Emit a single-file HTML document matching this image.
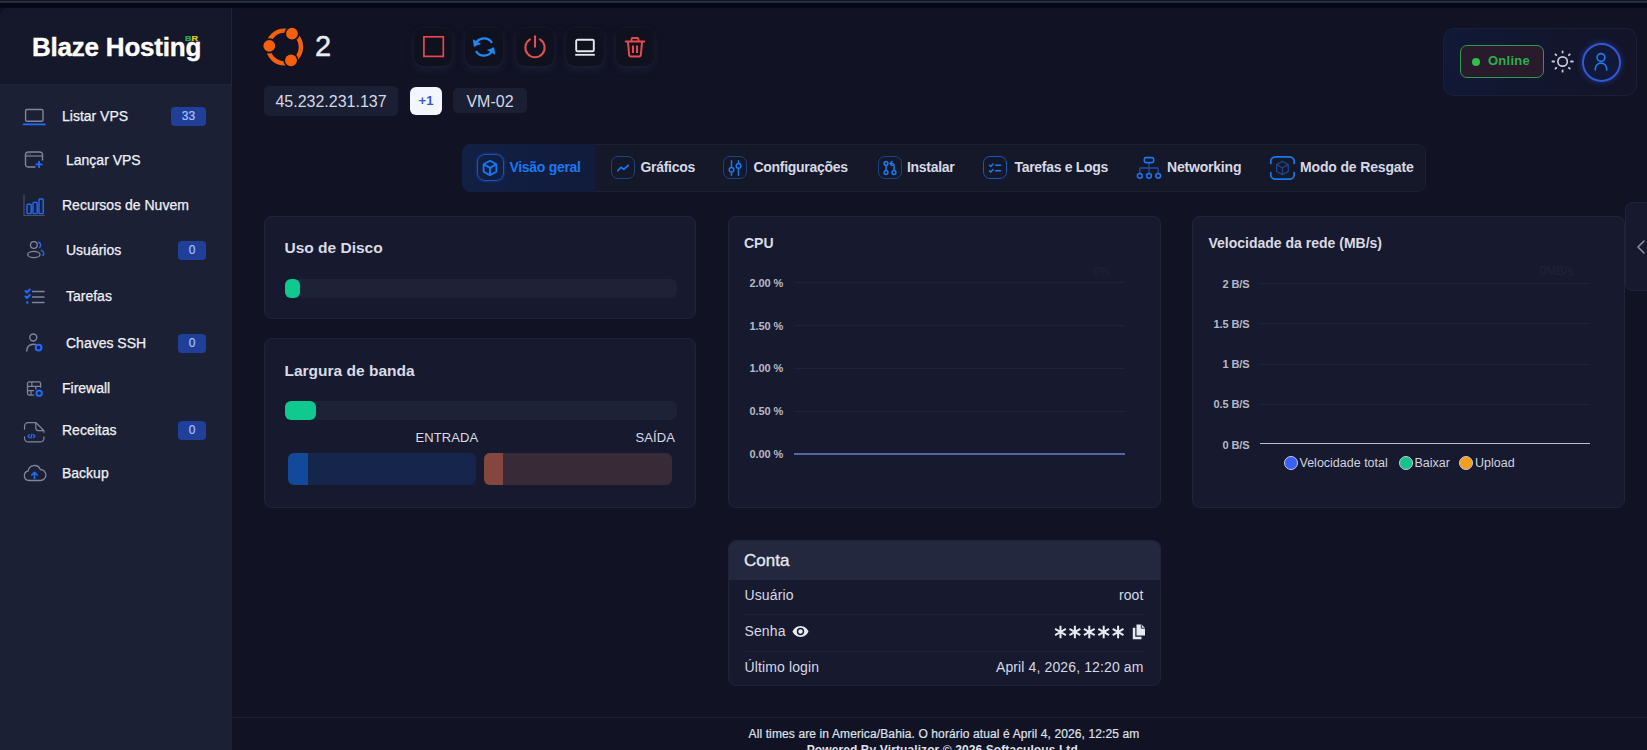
<!DOCTYPE html>
<html lang="pt">
<head>
<meta charset="utf-8">
<title>Blaze Hosting - VPS</title>
<style>
*{box-sizing:border-box;margin:0;padding:0}
html,body{width:1647px;height:750px;overflow:hidden;background:#111224;font-family:"Liberation Sans",sans-serif;color:#e6e8f0}
.abs{position:absolute}
#topstrip{position:absolute;left:0;top:0;width:1647px;height:8px;background:linear-gradient(180deg,#171718 0,#171718 0.8px,#2c314b 0.8px,#2a2f49 2px,#1a1f38 2.8px,#040919 3.4px,#030819 7px,#0a0e20 8px)}
#sidebar{position:absolute;left:0;top:8px;width:232px;height:742px;background:#1c2035;border-top-left-radius:10px}
#logo{position:absolute;left:0;top:0;width:232px;height:77px;background:#15172a;border-bottom:1px solid #20243a;border-right:1px solid #20243a;border-top-left-radius:10px}
#logo .t{position:absolute;left:32px;top:23.5px;font-size:26px;font-weight:bold;color:#fff;letter-spacing:-0.22px;white-space:nowrap;-webkit-text-stroke:0.4px #fff}
.nav{position:absolute;left:0;width:232px;height:30px}
.nav .ic{position:absolute;left:22px;top:3px;width:24px;height:24px}
.nav .lb{position:absolute;top:7px;font-size:14px;color:#eef0f6;white-space:nowrap;-webkit-text-stroke:0.25px #eef0f6}
.nav .bd{position:absolute;top:5.700px;height:19.600px;background:#1f3f98;color:#a9c0ff;font-size:12px;line-height:19.500px;text-align:center;border-radius:4px;-webkit-text-stroke:0.2px #a9c0ff}
#main{position:absolute;left:232px;top:8px;width:1415px;height:742px;background:#111224}
.card{position:absolute;background:#171a2e;border:1px solid #20243a;border-radius:8px}
.ctitle{position:absolute;font-weight:bold;color:#d9dbe6;white-space:nowrap}
.track{position:absolute;background:#1e2237;border-radius:6px}
.fill{position:absolute;left:0;top:0;height:100%;background:#10c98f;border-radius:6px}

.abtn{position:absolute;top:20px;width:38px;height:38px;border-radius:9px;background:#10111f;box-shadow:0 4px 7px rgba(36,42,70,.5),0 0 3px rgba(30,34,58,.6)}
.abtn svg{position:absolute;left:7px;top:7px;width:24px;height:24px}
.chip{position:absolute;background:#1b1f33;border-radius:5px;color:#d5d8e6;font-size:16px;text-align:center;white-space:nowrap}
#tabs{position:absolute;left:230px;top:136px;width:964px;height:48px;background:#151829;border:1px solid #1c2036;border-radius:9px}
.tab{position:absolute;top:0;height:46px}
.tab .ti{position:absolute;top:10px;width:26px;height:26px}
.tab .tl{position:absolute;top:15px;font-size:14px;font-weight:bold;color:#dfe2ee;white-space:nowrap;letter-spacing:-0.2px}

.tbox{position:absolute;top:11px;width:24px;height:23px;border:1px solid #1b4187;border-radius:7px}
.tbox svg,.tsv{position:absolute}
.tl{position:absolute;top:14px;font-size:14px;line-height:17px;font-weight:bold;color:#d6d9e5;white-space:nowrap;letter-spacing:-0.3px}

.yl{position:absolute;font-size:11px;line-height:13px;font-weight:bold;color:#b6b9c8;margin-top:0.6px;white-space:nowrap;letter-spacing:-0.1px}
.gl{position:absolute;height:1px;background:#1f2338}
.row{position:absolute;left:16px;font-size:14px;line-height:17px;color:#d5d8e6;white-space:nowrap;letter-spacing:0.12px;margin-top:-0.5px}
.rv{position:absolute;right:16px;font-size:14px;line-height:17px;color:#d5d8e6;white-space:nowrap;text-align:right;letter-spacing:0.12px;margin-top:-0.5px}
.lg{position:absolute;top:239px;font-size:12.5px;line-height:14px;color:#d0d3df;white-space:nowrap}
.ld{position:absolute;top:239.500px;width:14px;height:14px;border-radius:50%;border:1px solid #c3cbea}
</style>
</head>
<body>
<div id="topstrip"></div>

<!-- SIDEBAR -->
<div id="sidebar">
  <div id="logo"><div class="t">Blaze Hosting</div>
    <div class="abs" style="left:185px;top:26.5px;font-size:9px;line-height:9px;font-weight:bold;transform:scaleY(0.8);transform-origin:0 0;-webkit-text-stroke:0.3px currentColor"><span style="color:#2fae5a">B</span><span style="color:#f2c81c">R</span></div>
  </div>

  <div class="nav" style="top:93px">
    <svg class="ic" viewBox="0 0 24 24" fill="none"><rect x="3.600" y="5.500" width="17.400" height="11.800" rx="1.400" stroke="#80859d" stroke-width="1.400"/><path d="M1.500 20.400H23" stroke="#1f6bff" stroke-width="1.6" stroke-linecap="round"/></svg>
    <div class="lb" style="left:62px">Listar VPS</div><div class="bd" style="left:171px;width:35px">33</div>
  </div>
  <div class="nav" style="top:137px">
    <svg class="ic" viewBox="0 0 24 24" fill="none"><path d="M13 19H6.100A2.600 2.600 0 0 1 3.500 16.400V6.600A2.600 2.600 0 0 1 6.100 4H17.900A2.600 2.600 0 0 1 20.500 6.600V12" stroke="#80859d" stroke-width="1.400" stroke-linecap="round"/><path d="M3.500 8H20.500" stroke="#80859d" stroke-width="1.200"/><path d="M6 6h.01M8.200 6h.01" stroke="#80859d" stroke-width="1.100" stroke-linecap="round"/><path d="M17 13.600V19.200M14.200 16.400H19.800" stroke="#1f6bff" stroke-width="1.900" stroke-linecap="round"/></svg>
    <div class="lb" style="left:66px">Lançar VPS</div>
  </div>
  <div class="nav" style="top:182px">
    <svg class="ic" viewBox="0 0 24 24" fill="none"><path d="M2 1.500V22.500H23" stroke="#4a4f68" stroke-width="1.1"/><rect x="5" y="11.300" width="4.200" height="9.300" rx="0.800" stroke="#1f6bff" stroke-width="1.4"/><rect x="11" y="9.400" width="4.200" height="11.200" rx="0.800" stroke="#1f6bff" stroke-width="1.4"/><rect x="17" y="6" width="4.200" height="14.600" rx="0.800" stroke="#1f6bff" stroke-width="1.400"/></svg>
    <div class="lb" style="left:62px">Recursos de Nuvem</div>
  </div>
  <div class="nav" style="top:227px">
    <svg class="ic" viewBox="0 0 24 24" fill="none" style="left:23.500px;top:2.500px;width:22.500px;height:22.500px"><circle cx="10.500" cy="7.500" r="3.600" stroke="#80859d" stroke-width="1.400"/><ellipse cx="10.500" cy="17.600" rx="6.600" ry="3.400" stroke="#80859d" stroke-width="1.400"/><path d="M15.500 4.500a3.300 3.300 0 0 1 1.200 5.600" stroke="#1f6bff" stroke-width="1.500" stroke-linecap="round"/><path d="M18.500 13.200c1.700.8 2.600 2 2.600 3.300 0 .8-.3 1.500-.9 2.100" stroke="#1f6bff" stroke-width="1.500" stroke-linecap="round"/></svg>
    <div class="lb" style="left:66px">Usuários</div><div class="bd" style="left:178px;width:28px">0</div>
  </div>
  <div class="nav" style="top:273px">
    <svg class="ic" viewBox="0 0 24 24" fill="none" style="left:23px"><path d="M9.500 7.500H21M9.500 13H21M9.500 18.500H21" stroke="#80859d" stroke-width="1.500" stroke-linecap="round"/><path d="M2.500 7l1.500 1.500 2.800-3M2.500 12.500l1.500 1.500 2.800-3" stroke="#1f6bff" stroke-width="2" stroke-linecap="round" stroke-linejoin="round"/><circle cx="4.300" cy="18.500" r="1.200" fill="#1f6bff"/></svg>
    <div class="lb" style="left:66px">Tarefas</div>
  </div>
  <div class="nav" style="top:320px">
    <svg class="ic" viewBox="0 0 24 24" fill="none"><circle cx="11.300" cy="6.500" r="3.500" stroke="#80859d" stroke-width="1.400"/><path d="M4.800 20c0-4 2.400-6.800 6.500-6.800 .8 0 1.500.1 2.200.3" stroke="#80859d" stroke-width="1.400" stroke-linecap="round"/><circle cx="16.600" cy="16.600" r="2.900" stroke="#1f6bff" stroke-width="2"/></svg>
    <div class="lb" style="left:66px">Chaves SSH</div><div class="bd" style="left:178px;width:28px">0</div>
  </div>
  <div class="nav" style="top:365px">
    <svg class="ic" viewBox="0 0 24 24" fill="none" style="left:24.300px;top:5px;width:21px;height:21px"><path d="M11 19.500H6A2 2 0 0 1 4 17.500V6.500A2 2 0 0 1 6 4.500H17A2 2 0 0 1 19 6.500V10.500" stroke="#80859d" stroke-width="1.500" stroke-linecap="round"/><path d="M4 9.500H19M4 14.500H11.500M9 4.500V9.500M13.500 9.500V13M8 14.500V19.500" stroke="#80859d" stroke-width="1.400"/><circle cx="17.300" cy="17.300" r="3.100" stroke="#1f6bff" stroke-width="2.200"/></svg>
    <div class="lb" style="left:62px">Firewall</div>
  </div>
  <div class="nav" style="top:407px">
    <svg class="ic" viewBox="0 0 24 24" fill="none" style="left:22.300px;top:4.500px;width:24.500px;height:24.500px"><path d="M2.500 9V6A3.500 3.500 0 0 1 6 2.500H13.500L21.500 10.500V12" stroke="#80859d" stroke-width="1.200" stroke-linecap="round" stroke-linejoin="round"/><path d="M13.500 2.500V7.500A3 3 0 0 0 16.500 10.500H21.500" stroke="#80859d" stroke-width="1.200" stroke-linejoin="round"/><path d="M2.500 16.500V18A3.500 3.500 0 0 0 6 21.500H18A3.500 3.500 0 0 0 21.500 18V16.500" stroke="#80859d" stroke-width="1.200" stroke-linecap="round"/><path d="M7.300 14.300l-1.500 1.500 1.500 1.500M11.300 14.300l1.500 1.500-1.500 1.500M9.800 14l-1 3.600" stroke="#1f6bff" stroke-width="1.300" stroke-linecap="round" stroke-linejoin="round"/></svg>
    <div class="lb" style="left:62px">Receitas</div><div class="bd" style="left:178px;width:28px">0</div>
  </div>
  <div class="nav" style="top:450px">
    <svg class="ic" viewBox="0 0 24 24" fill="none" style="left:22px;top:3px;width:25px;height:24px"><path d="M6.500 19.500A4.800 4.800 0 0 1 5.700 10 6.300 6.300 0 0 1 17.800 8.500 5.500 5.500 0 0 1 18 19.500Z" stroke="#80859d" stroke-width="1.300" stroke-linejoin="round"/><path d="M12 17.500V11.500M9.300 14l2.700-2.700 2.700 2.700" stroke="#1f6bff" stroke-width="1.700" stroke-linecap="round" stroke-linejoin="round"/></svg>
    <div class="lb" style="left:62px">Backup</div>
  </div>

</div>

<!-- MAIN -->
<div id="main">

  <!-- ubuntu -->
  <svg class="abs" style="left:28px;top:16px;width:48px;height:48px" viewBox="0 0 48 48" fill="none">
    <circle cx="24.500" cy="23" r="16.400" stroke="#f4600c" stroke-width="4.400"/>
    <circle cx="9.3" cy="21.8" r="7.6" fill="#111224"/><circle cx="32" cy="9.700" r="7.600" fill="#111224"/><circle cx="31" cy="36.400" r="7.600" fill="#111224"/>
    <circle cx="9.300" cy="21.800" r="5.900" fill="#f4600c"/><circle cx="32" cy="9.700" r="5.900" fill="#f4600c"/><circle cx="31" cy="36.400" r="5.900" fill="#f4600c"/>
  </svg>
  <div class="abs" style="left:83px;top:22px;font-size:29px;line-height:33px;color:#e8ecf8;-webkit-text-stroke:0.4px #e8ecf8">2</div>
  <!-- action buttons -->
  <div class="abtn" style="left:182px"><svg viewBox="0 0 24 24" fill="none"><rect x="2.900" y="1.800" width="19.400" height="19.600" stroke="#e5484d" stroke-width="1.700"/></svg></div>
  <div class="abtn" style="left:233px"><svg viewBox="0 0 24 24" fill="none" style="overflow:visible"><g transform="translate(12 12) scale(1.14 1.09) translate(-12 -12)"><path d="M4.200 10.500A8 8 0 0 1 18.600 7.500" stroke="#1e88f5" stroke-width="2.100" stroke-linecap="round"/><path d="M19.800 13.500A8 8 0 0 1 5.400 16.500" stroke="#1e88f5" stroke-width="2.100" stroke-linecap="round"/><path d="M2.200 4.800l.9 6.700 6.400-2.200z" fill="#1e88f5"/><path d="M21.800 19.200l-.9-6.700-6.400 2.200z" fill="#1e88f5"/></g></svg></div>
  <div class="abtn" style="left:284px"><svg viewBox="0 0 24 24" fill="none" style="overflow:visible"><g transform="translate(12 12) scale(1.07) translate(-12 -12.3)"><path d="M12 2.200V12" stroke="#e05252" stroke-width="1.900" stroke-linecap="round"/><path d="M7.300 5.200A9 9 0 1 0 16.700 5.200" stroke="#e05252" stroke-width="1.900" stroke-linecap="round"/></g></svg></div>
  <div class="abtn" style="left:333.500px"><svg viewBox="0 0 24 24" fill="none"><rect x="3.200" y="4.800" width="17.600" height="11.400" rx="1.300" stroke="#e8e8f0" stroke-width="1.900"/><path d="M2.200 19.800H21.800" stroke="#e8e8f0" stroke-width="1.800"/></svg></div>
  <div class="abtn" style="left:384px"><svg viewBox="0 0 24 24" fill="none"><path d="M2.800 6.500H21.200" stroke="#e5484d" stroke-width="2" stroke-linecap="round"/><path d="M8.500 6V4.200A1.200 1.200 0 0 1 9.700 3H14.300A1.200 1.200 0 0 1 15.500 4.200V6" stroke="#e5484d" stroke-width="1.900"/><path d="M5 7l1.100 12.700A2 2 0 0 0 8.100 21.500H15.900A2 2 0 0 0 17.900 19.700L19 7" stroke="#e5484d" stroke-width="2" stroke-linejoin="round"/><path d="M10 10.500V18M14 10.500V18" stroke="#e5484d" stroke-width="2"/></svg></div>
  <!-- chips -->
  <div class="chip" style="left:32px;top:78px;width:134px;height:30px;line-height:32px">45.232.231.137</div>
  <div class="chip" style="left:178px;top:79px;width:32px;height:28px;line-height:28px;background:#f3f6ff;color:#3558d6;font-size:13px;font-weight:bold;border-radius:6px">+1</div>
  <div class="chip" style="left:221px;top:80px;width:74px;height:25px;line-height:27px">VM-02</div>
  <!-- top right panel -->
  <div class="abs" style="left:1211px;top:20px;width:194px;height:68px;border-radius:11px;border:1px solid #1b2039;background:linear-gradient(100deg,#111937 0%,#12162e 50%,#141428 100%)"></div>
  <div class="abs" style="left:1228px;top:37px;width:84px;height:33px;border:1.5px solid #2c9a4b;border-radius:7px;background:#2a1b2c"></div>
  <div class="abs" style="left:1240px;top:49.500px;width:8px;height:8px;border-radius:50%;background:#2fbf4f"></div>
  <div class="abs" style="left:1256px;top:45px;font-size:13px;line-height:16px;font-weight:bold;color:#2cae4e;white-space:nowrap;letter-spacing:0.25px">Online</div>
  <svg class="abs" style="left:1318px;top:41px;width:26px;height:26px" viewBox="0 0 26 26" fill="none"><circle cx="12.600" cy="12.500" r="4.700" stroke="#c8cad8" stroke-width="1.700"/><path d="M12.600 2.300v1.200M12.600 21.500v1.200M2.400 12.500h1.800M21 12.500h1.800M5.400 5.300l.9.900M18.900 18.800l.9.900M5.400 19.700l.9-.9M18.900 6.200l.9-.9" stroke="#c8cad8" stroke-width="1.800" stroke-linecap="round"/></svg>
  <div class="abs" style="left:1350px;top:34.500px;width:39px;height:39px;border-radius:50%;border:2px solid #3358d6;background:#121838;box-shadow:0 0 6px rgba(44,87,218,.5)"></div>
  <svg class="abs" style="left:1357px;top:42px;width:24px;height:24px" viewBox="0 0 24 24" fill="none"><circle cx="12" cy="7.500" r="3.900" stroke="#1e7af0" stroke-width="1.700"/><path d="M6.300 19.800V18.800A5.700 5.700 0 0 1 17.700 18.800V19.800" stroke="#1e7af0" stroke-width="1.700" stroke-linecap="round"/></svg>


  <div id="tabs">
    <div class="abs" style="left:-1px;top:-1px;width:133px;height:48px;background:linear-gradient(90deg,#122044,#111b3b);border-radius:9px 0 0 9px"></div>
    <div class="tbox" style="left:13.500px;top:9px;width:27px;height:27px;border-radius:8px;border-color:#1b55b8;box-shadow:0 0 0 1.5px rgba(27,85,184,.25)">
      <svg style="left:3.500px;top:3.500px;width:18px;height:18px" viewBox="0 0 24 24" fill="none"><path d="M12 2.300L20.500 7V17L12 21.700 3.500 17V7Z" stroke="#1a78f0" stroke-width="2.500" stroke-linejoin="round"/><path d="M3.800 7.200L12 11.800 20.200 7.200M12 11.800V21.500" stroke="#1a78f0" stroke-width="2.500" stroke-linejoin="round"/></svg>
    </div>
    <div class="tl" style="left:46.500px;color:#1a78f0">Visão geral</div>

    <div class="tbox" style="left:147.500px"><svg style="left:4px;top:5px;width:14px;height:12px" viewBox="0 0 14 12" fill="none"><path d="M1.800 8.800L5 5.200 7.800 7.400 12.200 3.300" stroke="#1a78f0" stroke-width="1.700" stroke-linecap="round" stroke-linejoin="round"/></svg></div>
    <div class="tl" style="left:177.500px">Gráficos</div>

    <div class="tbox" style="left:260px"><svg style="left:3px;top:2.500px;width:16px;height:16px" viewBox="0 0 16 16" fill="none"><path d="M4.500 0.800V7.200M4.500 12.400V15.200M11.500 0.800V3.300M11.500 8.500V15.200" stroke="#1a78f0" stroke-width="1.500" stroke-linecap="round"/><circle cx="4.500" cy="9.800" r="2.300" stroke="#1a78f0" stroke-width="1.500"/><circle cx="11.500" cy="5.900" r="2.300" stroke="#1a78f0" stroke-width="1.500"/></svg></div>
    <div class="tl" style="left:290.500px">Configurações</div>

    <div class="tbox" style="left:415px"><svg style="left:3px;top:2.500px;width:16px;height:16px" viewBox="0 0 16 16" fill="none"><circle cx="4" cy="3.500" r="1.900" stroke="#1a78f0" stroke-width="1.500"/><circle cx="4" cy="12.500" r="1.900" stroke="#1a78f0" stroke-width="1.500"/><circle cx="12" cy="12.500" r="1.900" stroke="#1a78f0" stroke-width="1.500"/><path d="M4 5.500V10.500M12 10.500V6A2.500 2.500 0 0 0 9.500 3.500H8.500" stroke="#1a78f0" stroke-width="1.500" stroke-linecap="round"/><path d="M10 1.500L8 3.500 10 5.500" stroke="#1a78f0" stroke-width="1.500" stroke-linecap="round" stroke-linejoin="round"/></svg></div>
    <div class="tl" style="left:444px">Instalar</div>

    <div class="tbox" style="left:520px;border-color:#1a55bd"><svg style="left:3px;top:2.500px;width:16px;height:16px" viewBox="0 0 16 16" fill="none"><path d="M8.500 5.200H13.500M8.500 10.800H13.500" stroke="#1a78f0" stroke-width="1.600" stroke-linecap="round"/><path d="M2.500 5.300L3.800 6.500 6 4M2.500 10.900L3.800 12.100 6 9.600" stroke="#1a78f0" stroke-width="1.500" stroke-linecap="round" stroke-linejoin="round"/></svg></div>
    <div class="tl" style="left:551.500px">Tarefas e Logs</div>

    <svg class="tsv" style="left:673px;top:10px;width:26px;height:26px" viewBox="0 0 26 26" fill="none"><path d="M13 8V13M3.800 18V13.800Q3.800 13 4.600 13H21.400Q22.200 13 22.200 13.800V18M13 13V18" stroke="#1c4ea6" stroke-width="1.300"/><rect x="8.300" y="2.600" width="9.400" height="5" rx="1.600" stroke="#1a78f0" stroke-width="1.600"/><circle cx="3.800" cy="20.800" r="2.400" stroke="#1a78f0" stroke-width="1.500"/><circle cx="13" cy="20.800" r="2.400" stroke="#1a78f0" stroke-width="1.500"/><circle cx="22.200" cy="20.800" r="2.400" stroke="#1a78f0" stroke-width="1.500"/></svg>
    <div class="tl" style="left:704px;letter-spacing:-0.200px">Networking</div>

    <svg class="tsv" style="left:806px;top:10px;width:27px;height:26px" viewBox="0 0 27 26" fill="none"><path d="M1.800 8.500V6.500A4.700 4.700 0 0 1 6.500 1.800H20.500A4.700 4.700 0 0 1 25.200 6.500V8.500M1.800 17.500V19.500A4.700 4.700 0 0 0 6.500 24.200H20.500A4.700 4.700 0 0 0 25.200 19.500V17.500" stroke="#1a78f0" stroke-width="1.700" stroke-linecap="round"/><path d="M13.500 6.300L19.300 9.600V16.400L13.500 19.700 7.700 16.400V9.600ZM7.900 9.700L13.500 12.900 19.100 9.700M13.500 12.900V19.500" stroke="#1d4387" stroke-width="1.400" stroke-linejoin="round"/></svg>
    <div class="tl" style="left:837px;letter-spacing:-0.150px">Modo de Resgate</div>
  </div>


  <!-- Uso de Disco -->
  <div class="card" style="left:32px;top:207.500px;width:432px;height:103px">
    <div class="ctitle" style="left:19.500px;top:22.500px;font-size:15.500px;line-height:18px">Uso de Disco</div>
    <div class="track" style="left:19.500px;top:62px;width:392px;height:19px"><div class="fill" style="width:15.500px"></div></div>
  </div>
  <!-- Largura de banda -->
  <div class="card" style="left:32px;top:330px;width:432px;height:169.500px">
    <div class="ctitle" style="left:19.500px;top:23px;font-size:15.500px;line-height:18px">Largura de banda</div>
    <div class="track" style="left:19.500px;top:61.500px;width:392px;height:19.500px"><div class="fill" style="width:31px"></div></div>
    <div class="abs" style="left:150.500px;top:91px;font-size:13px;line-height:15px;color:#d9dbe6;letter-spacing:0.1px">ENTRADA</div>
    <div class="abs" style="right:20px;top:91px;font-size:13px;line-height:15px;color:#d9dbe6;letter-spacing:0.1px">SAÍDA</div>
    <div class="abs" style="left:23px;top:114px;width:188px;height:31.500px;border-radius:6px;background:#16254c;overflow:hidden"><div style="width:19.500px;height:100%;background:#12499a"></div></div>
    <div class="abs" style="left:218.500px;top:114px;width:188.500px;height:31.500px;border-radius:6px;background:#392a37;overflow:hidden"><div style="width:19.500px;height:100%;background:#844740"></div></div>
  </div>
  <!-- CPU -->
  <div class="card" style="left:495.500px;top:207.500px;width:433px;height:292px">
    <div class="ctitle" style="left:15.500px;top:18.400px;font-size:14px;line-height:17px">CPU</div>
    <div class="abs" style="left:365px;top:48px;font-size:11px;line-height:13px;color:#1f2338">0%</div>
    <div class="yl" style="left:21px;top:59.5px">2.00 %</div><div class="gl" style="left:65px;top:65.5px;width:331px"></div>
    <div class="yl" style="left:21px;top:102.5px">1.50 %</div><div class="gl" style="left:65px;top:108.5px;width:331px"></div>
    <div class="yl" style="left:21px;top:145px">1.00 %</div><div class="gl" style="left:65px;top:151px;width:331px"></div>
    <div class="yl" style="left:21px;top:188px">0.50 %</div><div class="gl" style="left:65px;top:194px;width:331px"></div>
    <div class="yl" style="left:21px;top:230.5px">0.00 %</div><div class="gl" style="left:65px;top:236px;width:331px;height:2px;background:#5a63a6"></div>
  </div>
  <!-- Network -->
  <div class="card" style="left:959.500px;top:207.500px;width:433px;height:292px">
    <div class="ctitle" style="left:16px;top:18.400px;font-size:14px;line-height:17px">Velocidade da rede (MB/s)</div>
    <div class="abs" style="left:347px;top:48px;font-size:12px;line-height:13px;color:#20243a">0MB/s</div>
    <div class="yl" style="right:374px;top:60.500px">2 B/S</div><div class="gl" style="left:67px;top:66.500px;width:330px"></div>
    <div class="yl" style="right:374px;top:100.500px">1.5 B/S</div><div class="gl" style="left:67px;top:106.500px;width:330px"></div>
    <div class="yl" style="right:374px;top:141px">1 B/S</div><div class="gl" style="left:67px;top:147px;width:330px"></div>
    <div class="yl" style="right:374px;top:181px">0.5 B/S</div><div class="gl" style="left:67px;top:187px;width:330px"></div>
    <div class="yl" style="right:374px;top:221.500px">0 B/S</div><div class="gl" style="left:67px;top:226px;width:330px;height:1.6px;background:#bcbfcb"></div>
    <div class="ld" style="left:91px;background:#3b5ffa"></div><div class="lg" style="left:107px">Velocidade total</div>
    <div class="ld" style="left:206px;background:#17c28b"></div><div class="lg" style="left:222px">Baixar</div>
    <div class="ld" style="left:266px;background:#f59e1b"></div><div class="lg" style="left:282.500px">Upload</div>
  </div>
  <!-- side tab -->
  <div class="abs" style="left:1393px;top:194px;width:30px;height:89px;background:#171a2e;border:1px solid #20243a;border-radius:8px 0 0 8px;border-right:none"></div>
  <svg class="abs" style="left:1403px;top:231px;width:12px;height:16px" viewBox="0 0 12 16" fill="none"><path d="M9 2L3 8 9 14" stroke="#8f93a8" stroke-width="1.500" stroke-linecap="round" stroke-linejoin="round"/></svg>
  <!-- Conta -->
  <div class="card" style="left:495.500px;top:531.500px;width:433px;height:146.500px;overflow:hidden">
    <div class="abs" style="left:0;top:0;width:100%;height:39px;background:#24283f"></div>
    <div class="abs" style="left:15.500px;top:10px;font-size:17px;line-height:20px;color:#e6e8f2;-webkit-text-stroke:0.3px #e6e8f2">Conta</div>
    <div class="row" style="top:47px">Usuário</div><div class="rv" style="top:47px">root</div>
    <div class="gl" style="left:16px;top:73.500px;width:400px"></div>
    <div class="row" style="top:82.500px">Senha</div>
    <svg class="abs" style="left:63.500px;top:84px;width:17px;height:13px" viewBox="0 0 17 13"><path d="M8.500 1C4.600 1 1.700 3.800 0.500 6.500 1.700 9.200 4.600 12 8.500 12S15.300 9.200 16.500 6.500C15.300 3.800 12.400 1 8.500 1Z" fill="#e6e8f2"/><circle cx="8.500" cy="6.500" r="3.700" fill="#171a2e"/><circle cx="8.500" cy="6.500" r="2.200" fill="#e6e8f2"/></svg>
    <svg class="abs" style="left:325.500px;top:84px;width:74px;height:14px" viewBox="0 0 74 14" fill="none"><g transform="translate(6.5,7)"><path d="M0 -6.200V6.200M-5.400 -3.100L5.400 3.100M-5.400 3.100L5.400 -3.100" stroke="#e6e8f2" stroke-width="2" stroke-linecap="butt"/></g><g transform="translate(20.9,7)"><path d="M0 -6.200V6.200M-5.400 -3.100L5.400 3.100M-5.400 3.100L5.400 -3.100" stroke="#e6e8f2" stroke-width="2" stroke-linecap="butt"/></g><g transform="translate(35.3,7)"><path d="M0 -6.200V6.200M-5.400 -3.100L5.400 3.100M-5.400 3.100L5.400 -3.100" stroke="#e6e8f2" stroke-width="2" stroke-linecap="butt"/></g><g transform="translate(49.7,7)"><path d="M0 -6.200V6.200M-5.400 -3.100L5.400 3.100M-5.400 3.100L5.400 -3.100" stroke="#e6e8f2" stroke-width="2" stroke-linecap="butt"/></g><g transform="translate(64.1,7)"><path d="M0 -6.200V6.200M-5.400 -3.100L5.400 3.100M-5.400 3.100L5.400 -3.100" stroke="#e6e8f2" stroke-width="2" stroke-linecap="butt"/></g></svg>
    <svg class="abs" style="left:403.500px;top:83px;width:14px;height:16px" viewBox="0 0 14 16"><path d="M4.500 0.500H9.500L13 4V11.500H4.500Z" fill="#e6e8f2"/><path d="M9.300 0.500V4.200H13" stroke="#171a2e" stroke-width="0.900" fill="none"/><path d="M0.800 3.800H3.300V12.700H9.500V15.200H0.800Z" fill="#e6e8f2"/></svg>
    <div class="gl" style="left:16px;top:110px;width:400px"></div>
    <div class="row" style="top:119px">Último login</div><div class="rv" style="top:119px">April 4, 2026, 12:20 am</div>
  </div>


  <div class="abs" style="left:0;top:708.500px;width:1415px;height:1px;background:#1c2035"></div>
  <div class="abs" style="left:0;top:718.500px;width:1424px;text-align:center;font-size:12px;line-height:14px;color:#dfe1ea;letter-spacing:0.12px;-webkit-text-stroke:0.2px #dfe1ea">All times are in America/Bahia. O horário atual é April 4, 2026, 12:25 am</div>
  <div class="abs" style="left:0;top:735px;width:1424px;text-align:center;font-size:12px;line-height:14px;color:#dfe1ea;font-weight:bold;letter-spacing:0.1px">Powered By Virtualizor © 2026 Softaculous Ltd.</div>

</div>
</body>
</html>
